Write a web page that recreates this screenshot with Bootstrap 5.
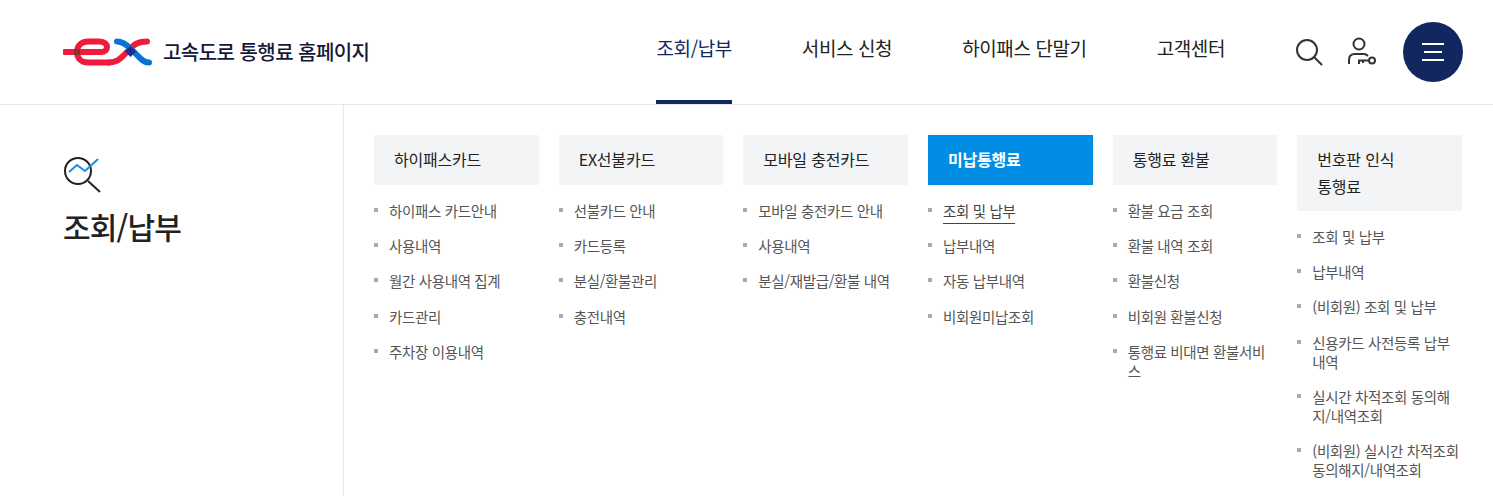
<!DOCTYPE html>
<html lang="ko">
<head>
  <meta charset="UTF-8" />
  <title>고속도로 통행료 홈페이지</title>
  <link href="https://cdn.jsdelivr.net/npm/bootstrap@5.3.0/dist/css/bootstrap.min.css" rel="stylesheet">
  <style>
    html, body { height: 100%; overflow: hidden; }
    body { font-family: "Noto Sans CJK KR", "Noto Sans", sans-serif; color: #222; background: #fff; }

    .site-top { height: 105px; border-bottom: 1px solid #e8e8e8; padding: 0 30px 0 63px; }
    .site-name { font-size: 20px; font-weight: 500; color: #14193a; letter-spacing: -0.55px; margin-left: 10px; }
    .top-menu { gap: 70px; margin-right: 70px; }
    .top-link { height: 104px; line-height: 96px; font-size: 19px; color: #222; letter-spacing: -0.4px; text-decoration: none; position: relative; }
    .top-link.on { color: #12265f; }
    .top-link.on::after { content: ""; position: absolute; left: 0; right: 0; bottom: 0; height: 4px; background: #12265f; }
    .menu-round { width: 60px; height: 60px; border-radius: 50%; background: #12265f; border: 0; margin-left: 26px; }
    .icon-plain { background: none; border: 0; padding: 0; line-height: 0; }

    .side-panel { width: 344px; flex: none; border-right: 1px solid #e8e8e8; padding: 50px 0 0 63px; height: 391px; }
    .side-title { font-size: 30px; font-weight: 500; letter-spacing: -0.8px; margin: 11px 0 0; color: #222; line-height: 44px; }

    .menu-grid { display: grid; grid-template-columns: repeat(6, 1fr); gap: 20px; width: 1088px; margin: 30px 0 0 30px; align-items: start; }
    .group-head { background: #f3f4f6; min-height: 50px; padding: 11px 20px; font-size: 16px; line-height: 27px; color: #222; letter-spacing: -0.2px; margin-bottom: 16px; }
    .group-head.on { background: #008de3; color: #fff; font-weight: 700; }
    .sub-list { list-style: none; margin: 0; padding: 0; }
    .sub-list li { position: relative; padding-left: 15px; font-size: 14.5px; line-height: 19px; color: #555; letter-spacing: -0.35px; margin-bottom: 16.2px; }
    .sub-list li::before { content: ""; position: absolute; left: 0; top: 7px; width: 4px; height: 4px; background: #aaa; }
    .sub-list a { color: inherit; text-decoration: none; }
    .sub-list a.on { color: #444; border-bottom: 1px solid #444; padding-bottom: 2px; }
  </style>
</head>
<body>

  <header class="site-top d-flex align-items-center justify-content-between">
    <a class="d-flex align-items-center text-decoration-none" href="#">
      <svg width="90" height="28" viewBox="0 0 90 28" fill="none">
        <path d="M2 14H38C42 14 44 11.500 44 9C44 5 40 3.500 36 3.500H25C18 3.500 14 8 14 14C14 20 18 24.500 25 24.500H46" stroke="#ee1c3a" stroke-width="6" stroke-linecap="round"/>
        <path d="M46 24.500C54 24.500 57 21 61 17L68 10C71 7 74 3.500 84 3.500" stroke="#ee1c3a" stroke-width="6" stroke-linecap="round"/>
        <path d="M54 3.500C60 3.500 64 7 68 11L73 16C77 20 80 24.500 86 24.500" stroke="#0a72d3" stroke-width="6" stroke-linecap="round"/>
        <path d="M62 13.500L67.500 8L73 13.500L67.500 19Z" fill="#1f2c90"/>
        <rect x="11" y="11" width="6" height="6" fill="#8a3030"/>
      </svg>
      <span class="site-name">고속도로 통행료 홈페이지</span>
    </a>
    <div class="d-flex align-items-center">
      <nav class="top-menu d-flex">
        <a class="top-link on" href="#">조회/납부</a>
        <a class="top-link" href="#">서비스 신청</a>
        <a class="top-link" href="#">하이패스 단말기</a>
        <a class="top-link" href="#">고객센터</a>
      </nav>
      <button class="icon-plain me-4" type="button" aria-label="검색">
        <svg width="28" height="28" viewBox="0 0 28 28" fill="none" stroke="#333" stroke-width="2"><circle cx="12" cy="12" r="10"/><path d="M19.500 19.500L27 27"/></svg>
      </button>
      <button class="icon-plain" type="button" aria-label="로그인">
        <svg width="30" height="30" viewBox="0 0 30 30" fill="none" stroke="#333" stroke-width="2"><circle cx="12" cy="7" r="5.500"/><path d="M2 27V23C2 19 4 17 8 17H17C19 17 20 18 21 19"/><circle cx="25" cy="23.500" r="3"/><path d="M22 23.500H11M12 23.500V27M16 23.500V26"/></svg>
      </button>
      <button class="menu-round d-flex flex-column align-items-center justify-content-center" type="button" aria-label="메뉴">
        <svg width="22" height="20" viewBox="0 0 22 20" stroke="#fff" stroke-width="2"><path d="M0 2H22M2 10H20M0 18H22"/></svg>
      </button>
    </div>
  </header>

  <div class="d-flex">
    <aside class="side-panel">
      <svg width="40" height="38" viewBox="0 0 40 38" fill="none">
        <circle cx="15" cy="16" r="13" stroke="#222" stroke-width="2"/>
        <path d="M25 26L37 37" stroke="#222" stroke-width="2"/>
        <path d="M6 17L14 10L22 16L35 4" stroke="#1390e5" stroke-width="2"/>
      </svg>
      <h2 class="side-title">조회/납부</h2>
    </aside>

    <main class="menu-grid">
      <section>
        <div class="group-head">하이패스카드</div>
        <ul class="sub-list">
          <li><a href="#">하이패스 카드안내</a></li>
          <li><a href="#">사용내역</a></li>
          <li><a href="#">월간 사용내역 집계</a></li>
          <li><a href="#">카드관리</a></li>
          <li><a href="#">주차장 이용내역</a></li>
        </ul>
      </section>
      <section>
        <div class="group-head">EX선불카드</div>
        <ul class="sub-list">
          <li><a href="#">선불카드 안내</a></li>
          <li><a href="#">카드등록</a></li>
          <li><a href="#">분실/환불관리</a></li>
          <li><a href="#">충전내역</a></li>
        </ul>
      </section>
      <section>
        <div class="group-head">모바일 충전카드</div>
        <ul class="sub-list">
          <li><a href="#">모바일 충전카드 안내</a></li>
          <li><a href="#">사용내역</a></li>
          <li><a href="#">분실/재발급/환불 내역</a></li>
        </ul>
      </section>
      <section>
        <div class="group-head on">미납통행료</div>
        <ul class="sub-list">
          <li><a class="on" href="#">조회 및 납부</a></li>
          <li><a href="#">납부내역</a></li>
          <li><a href="#">자동 납부내역</a></li>
          <li><a href="#">비회원미납조회</a></li>
        </ul>
      </section>
      <section>
        <div class="group-head">통행료 환불</div>
        <ul class="sub-list">
          <li><a href="#">환불 요금 조회</a></li>
          <li><a href="#">환불 내역 조회</a></li>
          <li><a href="#">환불신청</a></li>
          <li><a href="#">비회원 환불신청</a></li>
          <li><a href="#">통행료 비대면 환불서비스</a></li>
        </ul>
      </section>
      <section>
        <div class="group-head">번호판 인식<br>통행료</div>
        <ul class="sub-list">
          <li><a href="#">조회 및 납부</a></li>
          <li><a href="#">납부내역</a></li>
          <li><a href="#">(비회원) 조회 및 납부</a></li>
          <li><a href="#">신용카드 사전등록 납부내역</a></li>
          <li><a href="#">실시간 차적조회 동의해지/내역조회</a></li>
          <li><a href="#">(비회원) 실시간 차적조회 동의해지/내역조회</a></li>
        </ul>
      </section>
    </main>
  </div>

  <script src="https://cdn.jsdelivr.net/npm/bootstrap@5.3.0/dist/js/bootstrap.bundle.min.js"></script>
</body>
</html>
